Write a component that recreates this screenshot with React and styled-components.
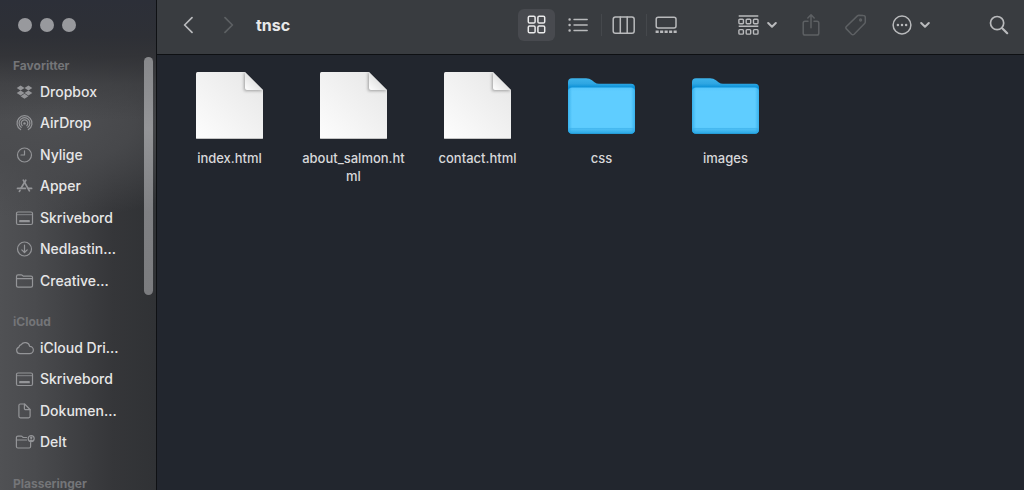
import React from "react";
import styled, { createGlobalStyle } from "styled-components";

const GlobalStyle = createGlobalStyle`
  *, *::before, *::after { box-sizing: border-box; }
  body {
    margin: 0;
    background: #22262e;
    font-family: Inter, "Liberation Sans", sans-serif;
    overflow: hidden;
  }
  button { font: inherit; color: inherit; background: none; border: 0; padding: 0; }
  svg { display: block; flex: none; }
`;

const Window = styled.div`
  display: flex;
  height: 100vh;
`;

const Sidebar = styled.aside`
  display: flex;
  flex-direction: column;
  flex: none;
  width: 157px;
  border-right: 1px solid #0f1114;
  background:
    linear-gradient(180deg, #2c2f38 0, #2e3036 36px, rgba(50, 51, 55, 0.95) 56px, rgba(60, 61, 64, 0.6) 84px, rgba(72, 73, 76, 0) 120px),
    radial-gradient(190px 100px at 50px 120px, rgba(78, 79, 82, 1) 0, rgba(74, 75, 78, 0.85) 45%, rgba(60, 61, 64, 0) 100%),
    linear-gradient(90deg, #505154 0, #4a4b4e 22%, #3f4043 48%, #353639 72%, #303235 100%);
`;

const WindowControls = styled.div`
  display: flex;
  flex: none;
  gap: 8px;
  height: 56px;
  padding: 18px 18px 0;
`;

const WindowControl = styled.button`
  width: 14px;
  height: 14px;
  border-radius: 50%;
  background: #98999d;
`;

const SidebarBody = styled.div`
  display: flex;
  flex: 1;
  min-height: 0;
`;

const Places = styled.nav`
  display: flex;
  flex-direction: column;
  flex: 1;
  gap: 16px;
  min-width: 0;
  overflow-y: auto;
  scrollbar-width: none;
`;

const ScrollTrack = styled.div`
  flex: none;
  width: 12px;
  padding-top: 1px;
`;

const ScrollThumb = styled.div`
  width: 9px;
  height: 55%;
  border-radius: 5px;
  background: linear-gradient(180deg, #87888b, #949598 30%, #7f8083 65%, #7b7c7f);
`;

const SectionTitle = styled.h2`
  margin: 0;
  padding-left: 13px;
  font-size: 12px;
  font-weight: 700;
  line-height: 20px;
  color: #747578;
`;

const PlaceList = styled.ul`
  margin: 0;
  padding: 0;
  list-style: none;
`;

const PlaceItem = styled.li`
  height: 31px;
  &:nth-child(even) { height: 32px; }
`;

const PlaceLink = styled.a`
  display: flex;
  align-items: center;
  gap: 5px;
  height: 100%;
  padding-left: 15px;
  font-size: 14px;
  font-weight: 500;
  line-height: 20px;
  white-space: nowrap;
  color: #e6e6e7;
  text-decoration: none;
  svg { color: #949598; }
`;

const Main = styled.main`
  display: flex;
  flex-direction: column;
  flex: 1;
  min-width: 0;
`;

const Toolbar = styled.header`
  display: flex;
  align-items: center;
  flex: none;
  height: 55px;
  padding: 0 15px 5px 26px;
  border-bottom: 1px solid #0e1013;
  background: #393c40;
  color: #b9babc;
`;

const History = styled.div`
  display: flex;
  gap: 31px;
`;

const ToolButton = styled.button`
  display: flex;
  align-items: center;
  gap: 8px;
  color: ${(p) => (p.$dim ? "#5d6063" : "inherit")};
`;

const Title = styled.h1`
  flex: 1;
  margin: 0 0 0 22px;
  font-size: 16px;
  font-weight: 700;
  line-height: 24px;
  color: #e8e8e9;
`;

const Views = styled.div`
  display: flex;
  align-items: center;
`;

const ViewButton = styled.button`
  display: flex;
  align-items: center;
  justify-content: center;
  width: ${(p) => p.$width}px;
  height: 32px;
  border-radius: 6px;
  background: ${(p) => (p.$active ? "#484a4f" : "transparent")};
  color: ${(p) => (p.$active ? "#e9e9ea" : "inherit")};
`;

const Separator = styled.span`
  width: 1px;
  height: 22px;
  background: #45484c;
`;

const Actions = styled.div`
  display: flex;
  align-items: center;
  gap: 25px;
  margin: 0 59px 0 53px;
`;

const Files = styled.section`
  display: flex;
  flex-wrap: wrap;
  align-content: flex-start;
  gap: 15px;
  flex: 1;
  padding: 17px 18px;
  background: #22262e;
`;

const FileTile = styled.button`
  display: flex;
  flex-direction: column;
  align-items: center;
  gap: 10px;
  width: 109px;
`;

const FileName = styled.span`
  font-size: 13px;
  font-weight: 500;
  line-height: 18px;
  text-align: center;
  word-break: break-all;
  color: #d8d8da;
`;

const Icon = ({ w, h, sw = 1, children }) => (
  <svg
    width={w}
    height={h}
    viewBox={`0 0 ${w} ${h}`}
    fill="none"
    stroke="currentColor"
    strokeWidth={sw}
    strokeLinecap="round"
    strokeLinejoin="round"
    aria-hidden="true"
  >
    {children}
  </svg>
);

const glyphs = {
  dropbox: (
    <g fill="currentColor" stroke="none">
      <path d="M5.6 1.4 9.5 3.9 5.6 6.4 1.7 3.9z" />
      <path d="M13.4 1.4 17.3 3.9 13.4 6.4 9.5 3.9z" />
      <path d="M5.6 6.4 9.5 8.9 5.6 11.4 1.7 8.9z" />
      <path d="M13.4 6.4 17.3 8.9 13.4 11.4 9.5 8.9z" />
      <path d="M9.5 9.8 13.4 12.2 9.5 14.7 5.6 12.2z" />
    </g>
  ),
  airdrop: (
    <>
      <path d="M5.6 14.6A7.5 7.5 0 1 1 13.4 14.6" />
      <path d="M6.2 12.3A5.4 5.4 0 1 1 12.8 12.3" />
      <path d="M7.2 10.6A3.3 3.3 0 1 1 11.8 10.6" />
      <circle cx="9.5" cy="8.4" r="1.2" fill="currentColor" stroke="none" />
    </>
  ),
  clock: (
    <>
      <circle cx="9.5" cy="8" r="7" />
      <path d="M9.5 3.8V8H6" />
    </>
  ),
  apps: (
    <g strokeWidth="1.7">
      <path d="M8.3 2.2 14.4 12.8" />
      <path d="M10.8 2.2 6 10.3" />
      <path d="M2.5 10.4H10.4M13.4 10.4H16.6" />
      <path d="M5 12.3 4.4 13.4" />
    </g>
  ),
  desktop: (
    <>
      <rect x="1.5" y="2" width="16" height="12.5" rx="1.5" />
      <path d="M1.5 4.7H17.5" strokeWidth="0.8" />
      <rect x="4.2" y="10" width="10.6" height="2.3" rx="0.4" fill="currentColor" stroke="none" />
    </>
  ),
  download: (
    <>
      <circle cx="9.5" cy="8" r="7" />
      <path d="M9.5 4.2V11.3M6.8 8.8 9.5 11.5 12.2 8.8" />
    </>
  ),
  folder: (
    <>
      <path d="M1.5 12.8V3.4Q1.5 1.9 3 1.9H6.2Q6.9 1.9 7.3 2.3L8.2 3.1H16Q17.5 3.1 17.5 4.6V12.8Q17.5 14.2 16 14.2H3Q1.5 14.2 1.5 12.8z" />
      <path d="M1.5 5.7H17.5" />
    </>
  ),
  cloud: (
    <path d="M5 13.7A3.4 3.4 0 0 1 3.9 7.1 2.9 2.9 0 0 1 6.2 4.7 4.7 4.7 0 0 1 14.7 6.3 3.7 3.7 0 0 1 14.6 13.7z" />
  ),
  document: (
    <>
      <path d="M3.9 2.5Q3.9 1 5.4 1H9.6L15.1 6.5V13.3Q15.1 14.8 13.6 14.8H5.4Q3.9 14.8 3.9 13.3z" />
      <path d="M9.4 1.2V5.4Q9.4 6.7 10.7 6.7H14.9" />
    </>
  ),
  shared: (
    <>
      <path d="M11.6 3.5H8.2L7.3 2.6Q6.9 2.1 6.2 2.1H2.9Q1.4 2.1 1.4 3.6V12.5Q1.4 14 2.9 14H14.2Q15.6 14 15.6 12.5V8.6" />
      <path d="M1.4 6H11.6" />
      <circle cx="16.2" cy="4.6" r="3" />
      <circle cx="16.2" cy="3.8" r="1.2" fill="currentColor" stroke="none" />
      <path d="M14.2 6.6Q16.2 4.4 18.2 6.6L16.2 7.7z" fill="currentColor" stroke="none" />
    </>
  ),
};

const Chevron = () => (
  <Icon w={10} h={8} sw={2}><path d="M1.2 2 5 5.8 8.8 2" /></Icon>
);

const PageIcon = () => (
  <svg width="67" height="67" viewBox="0 0 67 67" aria-hidden="true">
    <defs>
      <linearGradient id="paper" x1="0" y1="1" x2="1" y2="0">
        <stop offset="0" stopColor="#fdfdfd" />
        <stop offset="1" stopColor="#e6e6e6" />
      </linearGradient>
      <linearGradient id="curl" x1="0" y1="1" x2="0.5" y2="0.5">
        <stop offset="0" stopColor="#ffffff" />
        <stop offset="1" stopColor="#e4e4e4" />
      </linearGradient>
      <filter id="curlShade" x="-40%" y="-40%" width="180%" height="180%">
        <feGaussianBlur stdDeviation="1.5" />
      </filter>
      <clipPath id="sheet">
        <path d="M1.5 0H49L67 18V65.5Q67 67 65.5 67H1.5Q0 67 0 65.5V1.5Q0 0 1.5 0z" />
      </clipPath>
    </defs>
    <g clipPath="url(#sheet)">
      <rect width="67" height="67" fill="url(#paper)" />
      <path d="M48 2V17.5Q48 19 49.5 19H67L49 0z" fill="#808080" opacity="0.7" filter="url(#curlShade)" />
      <path d="M49 0V16Q49 18 51 18H67z" fill="url(#curl)" />
      <path d="M0 66.5H67" stroke="#c4c4c4" />
    </g>
  </svg>
);

const FolderIcon = () => (
  <svg width="67" height="67" viewBox="0 0 67 67" aria-hidden="true">
    <defs>
      <linearGradient id="folderBack" x1="0" y1="0" x2="0" y2="1">
        <stop offset="0" stopColor="#3db2ea" />
        <stop offset="0.1" stopColor="#2ea6e2" />
        <stop offset="0.16" stopColor="#0d92d8" />
        <stop offset="1" stopColor="#1797da" />
      </linearGradient>
      <linearGradient id="folderFront" x1="0" y1="0" x2="0" y2="1">
        <stop offset="0" stopColor="#55c6fb" />
        <stop offset="0.08" stopColor="#5fcdff" />
        <stop offset="0.86" stopColor="#5fcdff" />
        <stop offset="0.91" stopColor="#4abcf3" />
        <stop offset="1" stopColor="#27a5e2" />
      </linearGradient>
      <linearGradient id="folderSides">
        <stop offset="0" stopColor="#1f9fe0" stopOpacity="0.6" />
        <stop offset="0.06" stopColor="#1f9fe0" stopOpacity="0" />
        <stop offset="0.94" stopColor="#1f9fe0" stopOpacity="0" />
        <stop offset="1" stopColor="#1f9fe0" stopOpacity="0.6" />
      </linearGradient>
    </defs>
    <path d="M0 10Q0 6.2 4 6.2H18Q21.5 6.2 24 8.2L26.5 10.2Q28.6 11.8 31 11.8H63Q67 11.8 67 15.8V57.5Q67 61.8 63 61.8H4Q0 61.8 0 57.5z" fill="url(#folderBack)" />
    <rect x="0" y="15.5" width="67" height="46.3" rx="4.2" fill="url(#folderFront)" />
    <rect x="0" y="15.5" width="67" height="46.3" rx="4.2" fill="url(#folderSides)" />
    <path d="M1 56.6H66" stroke="#3fb2eb" strokeWidth="0.7" />
  </svg>
);

const sections = [
  {
    title: "Favoritter",
    items: [
      ["dropbox", "Dropbox"],
      ["airdrop", "AirDrop"],
      ["clock", "Nylige"],
      ["apps", "Apper"],
      ["desktop", "Skrivebord"],
      ["download", "Nedlastin..."],
      ["folder", "Creative..."],
    ],
  },
  {
    title: "iCloud",
    items: [
      ["cloud", "iCloud Dri..."],
      ["desktop", "Skrivebord"],
      ["document", "Dokumen..."],
      ["shared", "Delt"],
    ],
  },
  { title: "Plasseringer", items: [] },
];

const files = [
  { name: "index.html", type: "page" },
  { name: "about_salmon.html", type: "page" },
  { name: "contact.html", type: "page" },
  { name: "css", type: "folder" },
  { name: "images", type: "folder" },
];

export default function App() {
  return (
    <>
      <GlobalStyle />
      <Window>
        <Sidebar>
          <WindowControls>
            <WindowControl aria-label="Lukk" />
            <WindowControl aria-label="Minimer" />
            <WindowControl aria-label="Zoom" />
          </WindowControls>
          <SidebarBody>
            <Places>
              {sections.map((section) => (
                <section key={section.title}>
                  <SectionTitle>{section.title}</SectionTitle>
                  <PlaceList>
                    {section.items.map(([glyph, label]) => (
                      <PlaceItem key={label}>
                        <PlaceLink href="#">
                          <Icon w={20} h={16} sw={1.2}>{glyphs[glyph]}</Icon>
                          {label}
                        </PlaceLink>
                      </PlaceItem>
                    ))}
                  </PlaceList>
                </section>
              ))}
            </Places>
            <ScrollTrack><ScrollThumb /></ScrollTrack>
          </SidebarBody>
        </Sidebar>

        <Main>
          <Toolbar>
            <History>
              <ToolButton aria-label="Tilbake">
                <Icon w={10} h={18} sw={1.7}><path d="M9 1.6 1.6 9 9 16.4" /></Icon>
              </ToolButton>
              <ToolButton aria-label="Frem" $dim>
                <Icon w={10} h={18} sw={1.7}><path d="M1 1.6 8.4 9 1 16.4" /></Icon>
              </ToolButton>
            </History>
            <Title>tnsc</Title>
            <Views>
              <ViewButton $width={37} $active aria-label="Symboler">
                <Icon w={19} h={19} sw={1.5}>
                  <rect x="1.3" y="1.3" width="6.8" height="6.8" rx="1.3" />
                  <rect x="10.9" y="1.3" width="6.8" height="6.8" rx="1.3" />
                  <rect x="1.3" y="10.9" width="6.8" height="6.8" rx="1.3" />
                  <rect x="10.9" y="10.9" width="6.8" height="6.8" rx="1.3" />
                </Icon>
              </ViewButton>
              <ViewButton $width={46} aria-label="Liste">
                <Icon w={20} h={16} sw={1.4}>
                  <path d="M6 2.5H19.2M6 8H19.2M6 13.5H19.2" />
                  <path d="M1.6 2.5h.01M1.6 8h.01M1.6 13.5h.01" strokeWidth="2.5" />
                </Icon>
              </ViewButton>
              <Separator />
              <ViewButton $width={44} aria-label="Kolonner">
                <Icon w={24} h={20} sw={1.5}>
                  <rect x="1.2" y="2" width="21" height="16.2" rx="2.3" />
                  <path d="M8.3 2V18.2M15.2 2V18.2" />
                </Icon>
              </ViewButton>
              <Separator />
              <ViewButton $width={38} aria-label="Galleri">
                <Icon w={22} h={18} sw={1.5}>
                  <rect x="1.2" y="1.2" width="19.8" height="10.8" rx="2" />
                  <path d="M.6 15.8H21.8" strokeWidth="2.6" strokeLinecap="butt" strokeDasharray="3.1 1.4" />
                </Icon>
              </ViewButton>
            </Views>
            <Actions>
              <ToolButton aria-label="Grupper">
                <Icon w={21} h={20} sw={1.4}>
                  <path d="M.7 1H20.3M.7 11.3H20.3" strokeLinecap="butt" />
                  {[4.2, 14.6].map((y) =>
                    [0.9, 8.2, 15.5].map((x) => (
                      <rect key={`${x}-${y}`} x={x} y={y} width="4.5" height="4.5" rx="0.9" />
                    ))
                  )}
                </Icon>
                <Chevron />
              </ToolButton>
              <ToolButton aria-label="Del" $dim>
                <Icon w={18} h={24} sw={1.5}>
                  <path d="M6 8.2H3Q1.2 8.2 1.2 10V20.2Q1.2 22 3 22H15Q16.8 22 16.8 20.2V10Q16.8 8.2 15 8.2H12" />
                  <path d="M9 14.8V2M5.8 5 9 1.8 12.2 5" />
                </Icon>
              </ToolButton>
              <ToolButton aria-label="Etiketter" $dim>
                <Icon w={22} h={22} sw={1.5}>
                  <path d="M12.4 1.9Q13 1.3 13.9 1.3L18.2 1.4Q20.3 1.4 20.3 3.5V7.8Q20.3 8.8 19.6 9.5L9.1 20.2Q7.8 21.3 6.6 20.2L1.4 14.9Q.3 13.6 1.4 12.5z" />
                  <circle cx="15.6" cy="6" r="0.9" />
                </Icon>
              </ToolButton>
              <ToolButton aria-label="Mer">
                <Icon w={20} h={20} sw={1.5}>
                  <circle cx="10" cy="10" r="8.9" />
                  <path d="M5.9 10h.01M10 10h.01M14.1 10h.01" strokeWidth="2.5" />
                </Icon>
                <Chevron />
              </ToolButton>
            </Actions>
            <ToolButton aria-label="Søk">
              <Icon w={20} h={20} sw={1.7}>
                <circle cx="8.1" cy="8.1" r="6.6" />
                <path d="M13.2 13.2 18.2 18.2" strokeWidth="2.2" />
              </Icon>
            </ToolButton>
          </Toolbar>
          <Files>
            {files.map((file) => (
              <FileTile key={file.name}>
                {file.type === "page" ? <PageIcon /> : <FolderIcon />}
                <FileName>{file.name}</FileName>
              </FileTile>
            ))}
          </Files>
        </Main>
      </Window>
    </>
  );
}
